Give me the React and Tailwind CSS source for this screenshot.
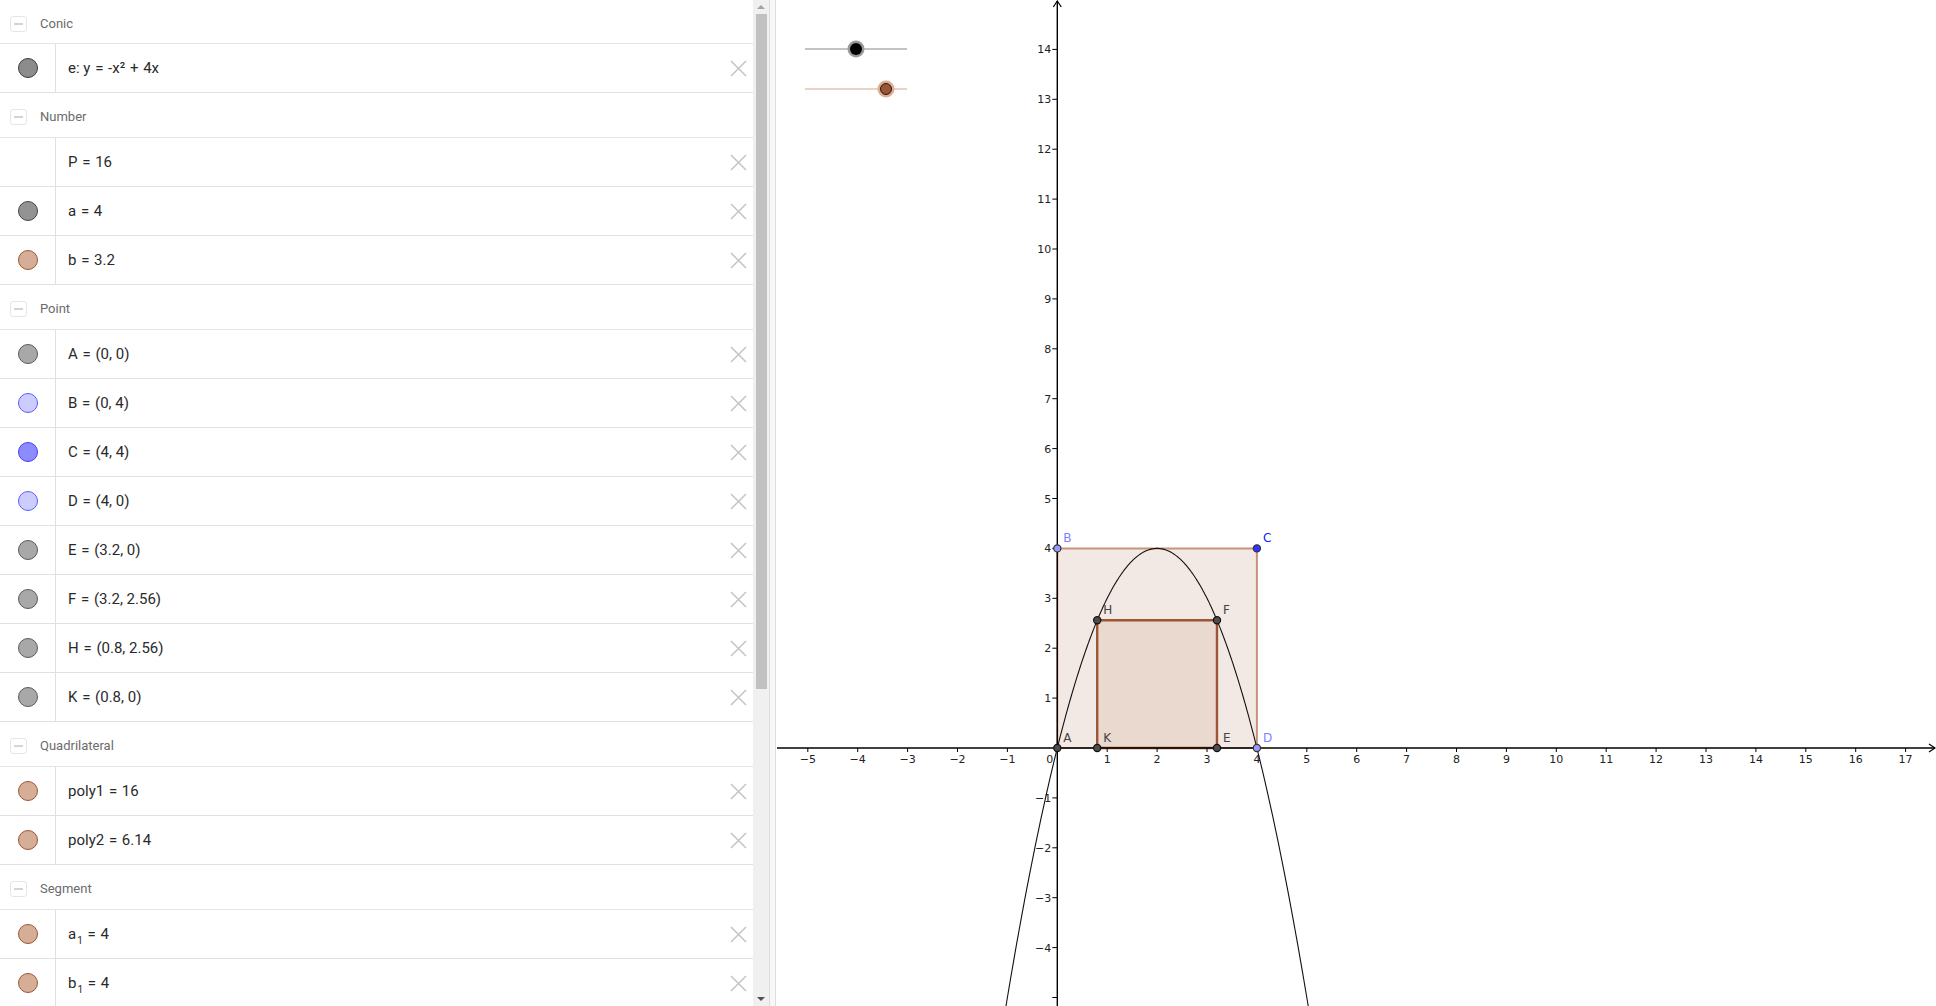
import React from "react";

const U = 49.9;
const OX = 281.3;
const OY = 748;
const sx = (x) => OX + x * U;
const sy = (y) => OY - y * U;

const Eq = () => <span className="mx-[1px]">=</span>;
const Pl = () => <span className="mx-[1px]">+</span>;
const Sub = ({ children }) => <sub className="text-[10px] align-[-3px] ml-[1px]">{children}</sub>;

const groups = [
  {
    title: "Conic",
    items: [{ c: "gray", t: <>e:&nbsp;y <Eq /> -x² <Pl /> 4x</> }],
  },
  {
    title: "Number",
    items: [
      { c: null, t: <>P <Eq /> 16</> },
      { c: "dark", t: <>a <Eq /> 4</> },
      { c: "tan", t: <>b <Eq /> 3.2</> },
    ],
  },
  {
    title: "Point",
    items: [
      { c: "light", t: <>A <Eq /> (0, 0)</> },
      { c: "pale", t: <>B <Eq /> (0, 4)</> },
      { c: "blue", t: <>C <Eq /> (4, 4)</> },
      { c: "pale", t: <>D <Eq /> (4, 0)</> },
      { c: "light", t: <>E <Eq /> (3.2, 0)</> },
      { c: "light", t: <>F <Eq /> (3.2, 2.56)</> },
      { c: "light", t: <>H <Eq /> (0.8, 2.56)</> },
      { c: "light", t: <>K <Eq /> (0.8, 0)</> },
    ],
  },
  {
    title: "Quadrilateral",
    items: [
      { c: "tan", t: <>poly1 <Eq /> 16</> },
      { c: "tan", t: <>poly2 <Eq /> 6.14</> },
    ],
  },
  {
    title: "Segment",
    items: [
      { c: "tan", t: <>a<Sub>1</Sub> <Eq /> 4</> },
      { c: "tan", t: <>b<Sub>1</Sub> <Eq /> 4</> },
    ],
  },
];

function Dot({ c }) {
  if (!c) return null;
  const cls = {
    gray: "bg-[#8c8c8c] border-[#3a3a3a]",
    dark: "bg-[#939393] border-[#454545]",
    light: "bg-[#a8a8a8] border-[#5a5a5a]",
    tan: "bg-[#d6ae98] border-[#9c5633]",
    pale: "bg-[#ccccff] border-[#5c5cff]",
    blue: "bg-[#8c8cff] border-[#4040ff]",
  }[c];
  return <div className={`w-[20px] h-[20px] rounded-full border ${cls}`} />;
}

function CloseIcon() {
  return (
    <svg width="17" height="17" viewBox="0 0 17 17">
      <path d="M1 1L16 16M16 1L1 16" stroke="#c4c4c4" strokeWidth="1.5" />
    </svg>
  );
}

function Header({ title, first }) {
  return (
    <div className={`${first ? "h-[44px] pt-[4px]" : "h-[45px] pt-[3px]"} flex items-center border-b border-[#e4e4e4]`}>
      <div className="ml-[10px] w-[17px] h-[16px] rounded-[3px] border border-[#e6e6e6] flex items-center justify-center">
        <div className="w-[9px] h-[2px] bg-[#d4d4d4]" />
      </div>
      <span className="ml-[13px] text-[13px] text-[#6b6b6b]">{title}</span>
    </div>
  );
}

function Row({ c, t }) {
  return (
    <div className="h-[49px] flex items-center border-b border-[#e0e0e0]">
      <div className="w-[56px] h-full flex items-center justify-center border-r border-[#e0e0e0]">
        <Dot c={c} />
      </div>
      <div className="flex-1 pl-[12px] text-[15px] text-[#2a2a2a]">{t}</div>
      <div className="w-[17px] mr-[6px]">
        <CloseIcon />
      </div>
    </div>
  );
}

function Graph() {
  const pts = [];
  for (let x = -1.1; x <= 5.1001; x += 0.02) {
    pts.push(`${sx(x).toFixed(2)},${sy(-x * x + 4 * x).toFixed(2)}`);
  }
  const xt = [];
  for (let i = -5; i <= 17; i++) if (i !== 0) xt.push(i);
  const yt = [];
  for (let i = -5; i <= 14; i++) if (i !== 0) yt.push(i);
  const lab = { fontFamily: "'DejaVu Sans', sans-serif", fontSize: 11, fill: "#222" };
  const P = (x, y, fill, stroke) => (
    <circle cx={sx(x)} cy={sy(y)} r="3.6" fill={fill} stroke={stroke} strokeWidth="1.2" />
  );
  const L = (x, y, s, color) => (
    <text x={sx(x) + 6} y={sy(y) - 6} style={{ fontFamily: "'DejaVu Sans', sans-serif", fontSize: 12, fill: color }}>
      {s}
    </text>
  );
  return (
    <svg width="1160" height="1006" className="block">
      {/* slider a */}
      <line x1="29" y1="49" x2="131" y2="49" stroke="#8a8a8a" strokeWidth="1.2" />
      <circle cx="80" cy="49" r="8.5" fill="#9a9a9a" />
      <circle cx="80" cy="49" r="6" fill="#000" />
      {/* slider b */}
      <line x1="29" y1="89" x2="131" y2="89" stroke="#d6a88e" strokeWidth="1.2" />
      <circle cx="110" cy="89" r="8.5" fill="#dcae95" />
      <circle cx="110" cy="89" r="5.5" fill="#9c5633" stroke="#000" strokeWidth="0.8" />

      {/* polygons */}
      <polygon
        points={`${sx(0)},${sy(0)} ${sx(4)},${sy(0)} ${sx(4)},${sy(4)} ${sx(0)},${sy(4)}`}
        fill="#f3e9e4"
        stroke="#c9927a"
        strokeWidth="2"
      />
      <polygon
        points={`${sx(0.8)},${sy(0)} ${sx(3.2)},${sy(0)} ${sx(3.2)},${sy(2.56)} ${sx(0.8)},${sy(2.56)}`}
        fill="#e9d9cf"
        stroke="#9c5633"
        strokeWidth="2.4"
      />

      {/* axes */}
      <line x1="1" y1={OY} x2="1159" y2={OY} stroke="#000" strokeWidth="1.4" />
      <path d={`M1153 ${OY - 4}L1159 ${OY}L1153 ${OY + 4}`} fill="none" stroke="#000" strokeWidth="1.2" />
      <line x1={OX} y1="1" x2={OX} y2="1006" stroke="#000" strokeWidth="1.4" />
      <path d={`M${OX - 4} 7L${OX} 1L${OX + 4} 7`} fill="none" stroke="#000" strokeWidth="1.2" />

      {xt.map((i) => (
        <g key={"x" + i}>
          <line x1={sx(i)} y1={OY} x2={sx(i)} y2={OY + 4} stroke="#000" strokeWidth="1" />
          <text x={sx(i)} y={OY + 15} textAnchor="middle" style={lab}>
            {i < 0 ? "\u2212" + -i : i}
          </text>
        </g>
      ))}
      {yt.map((i) => (
        <g key={"y" + i}>
          <line x1={OX - 5} y1={sy(i)} x2={OX} y2={sy(i)} stroke="#000" strokeWidth="1" />
          {i > -5 && (
            <text x={OX - 6} y={sy(i) + 4} textAnchor="end" style={lab}>
              {i < 0 ? "\u2212" + -i : i}
            </text>
          )}
        </g>
      ))}
      <text x={OX - 4} y={OY + 15} textAnchor="end" style={lab}>
        0
      </text>

      {/* parabola */}
      <polyline points={pts.join(" ")} fill="none" stroke="#111" strokeWidth="1.1" />

      {/* points */}
      {P(0, 0, "#4d4d4d", "#111")}
      {P(0.8, 0, "#4d4d4d", "#111")}
      {P(3.2, 0, "#4d4d4d", "#111")}
      {P(3.2, 2.56, "#4d4d4d", "#111")}
      {P(0.8, 2.56, "#4d4d4d", "#111")}
      {P(0, 4, "#9999ff", "#333")}
      {P(4, 0, "#9999ff", "#333")}
      {P(4, 4, "#3333ff", "#333")}
      {L(0, 0, "A", "#444")}
      {L(0.8, 0, "K", "#444")}
      {L(3.2, 0, "E", "#444")}
      {L(3.2, 2.56, "F", "#444")}
      {L(0.8, 2.56, "H", "#444")}
      {L(0, 4, "B", "#8080ff")}
      {L(4, 0, "D", "#8080ff")}
      {L(4, 4, "C", "#1a1aff")}
    </svg>
  );
}

export default function App() {
  return (
    <div className="flex h-[1006px] w-[1936px] overflow-hidden bg-white" style={{ fontFamily: "Roboto, 'Noto Sans', sans-serif" }}>
      <div className="w-[753px] h-full overflow-hidden">
        {groups.map((g, gi) => (
          <div key={g.title}>
            <Header title={g.title} first={gi === 0} />
            {g.items.map((it, k) => (
              <Row key={k} c={it.c} t={it.t} />
            ))}
          </div>
        ))}
      </div>
      <div className="w-[16px] h-full bg-[#f0f0f0] flex flex-col items-center">
        <div className="h-[14px] flex items-center justify-center">
          <div className="w-0 h-0 border-l-[4px] border-r-[4px] border-b-[4px] border-l-transparent border-r-transparent border-b-[#a3a3a3]" />
        </div>
        <div className="w-[11px] h-[675px] bg-[#c1c1c1]" />
        <div className="flex-1" />
        <div className="h-[14px] flex items-center justify-center">
          <div className="w-0 h-0 border-l-[4px] border-r-[4px] border-t-[4px] border-l-transparent border-r-transparent border-t-[#505050]" />
        </div>
      </div>
      <div className="w-[7px] h-full bg-[#f7f7f7] border-l border-r border-[#dedede]" />
      <div className="flex-1 h-full">
        <Graph />
      </div>
    </div>
  );
}
